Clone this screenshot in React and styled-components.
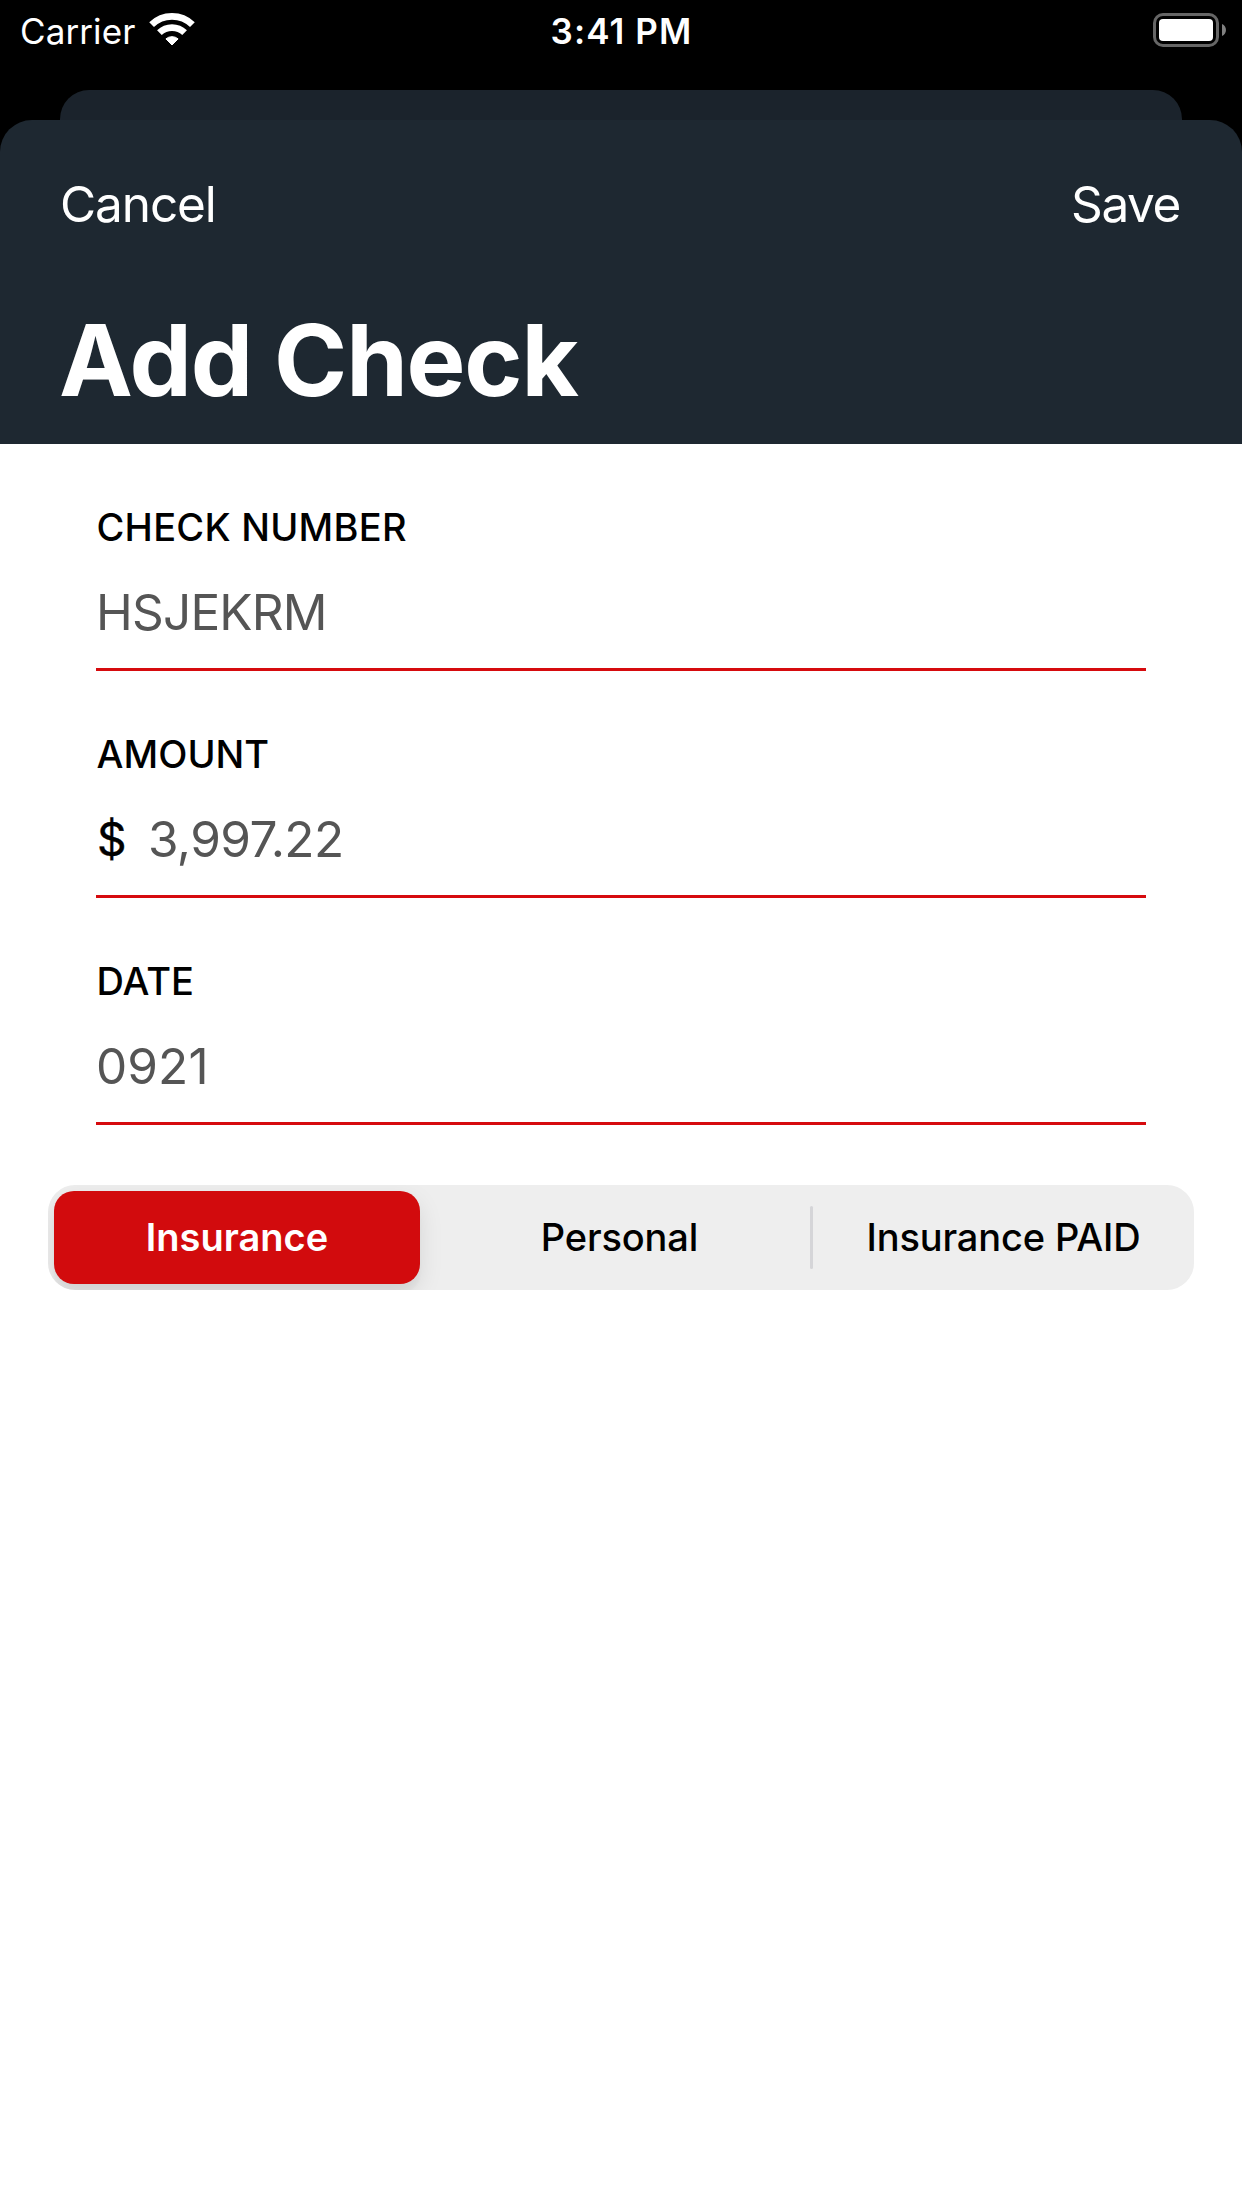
import React, { useState } from "react";
import styled, { createGlobalStyle } from "styled-components";

const GlobalStyle = createGlobalStyle`
  *, *::before, *::after { box-sizing: border-box; }
  body {
    margin: 0;
    background: #000;
    font-family: Inter, "Liberation Sans", sans-serif;
    -webkit-font-smoothing: antialiased;
  }
`;

const Screen = styled.div`
  display: flex;
  flex-direction: column;
  width: 1242px;
  height: 2208px;
  background: #000;
  overflow: hidden;
`;

const StatusBar = styled.header`
  display: grid;
  grid-template-columns: 1fr auto 1fr;
  align-items: center;
  height: 60px;
  margin-bottom: 30px;
  padding: 0 16px 0 20px;
  color: #fff;
  font-size: 35px;
  line-height: 44px;
`;

const Carrier = styled.div`
  display: flex;
  align-items: center;
  gap: 13px;
  padding-top: 2px;
  letter-spacing: 0.1px;

  svg { margin-bottom: 4px; }
`;

const Clock = styled.time`
  padding: 2px 3px 0 0;
  font-weight: 600;
  letter-spacing: 1.1px;
`;

const Battery = styled.div`
  justify-self: end;
  display: flex;
  align-items: center;
`;

const SheetBehind = styled.div`
  flex: none;
  height: 30px;
  margin: 0 60px;
  border-radius: 29px 29px 0 0;
  background: #1b232c;
`;

const Sheet = styled.main`
  flex: 1;
  display: flex;
  flex-direction: column;
`;

const SheetHeader = styled.div`
  flex: none;
  height: 324px;
  padding: 54px 62px 0 60px;
  border-radius: 32px 32px 0 0;
  background: #1e2831;
  color: #fff;
`;

const NavRow = styled.nav`
  display: flex;
  justify-content: space-between;
  height: 60px;
`;

const NavButton = styled.button`
  padding: 0;
  border: 0;
  background: none;
  color: inherit;
  font: 400 49.5px/60px Inter, "Liberation Sans", sans-serif;
  letter-spacing: ${(p) => p.$tracking}px;
`;

const Title = styled.h1`
  margin: 66px 0 0 -1px;
  font-size: 99px;
  font-weight: 700;
  line-height: 120px;
  letter-spacing: -1.2px;
`;

const Form = styled.form`
  flex: 1;
  display: flex;
  flex-direction: column;
  padding: 0 48px;
  background: #fff;
`;

const Field = styled.div`
  display: flex;
  flex-direction: column;
  gap: 31px;
  margin: 0 48px;
  padding: 60px 0 25px;
  border-bottom: 3px solid #d60b0e;
`;

const Label = styled.div`
  height: 46px;
  padding-left: 0.5px;
  color: #000;
  font-size: 38px;
  font-weight: 500;
  line-height: 46px;
  letter-spacing: ${(p) => p.$tracking}px;
`;

const ValueRow = styled.div`
  display: flex;
  align-items: center;
  height: 62px;
`;

const Prefix = styled.span`
  width: 52px;
  padding-left: 1px;
  color: #000;
  font-size: 46px;
  font-weight: 400;
  line-height: 62px;
  -webkit-text-stroke: 0.4px #000;
`;

const Value = styled.span`
  color: #555;
  font-size: 49.5px;
  line-height: 62px;
  letter-spacing: ${(p) => p.$tracking}px;
`;

const Segmented = styled.div`
  display: grid;
  grid-template-columns: 366px 9px 381px 3px 381px;
  align-items: center;
  height: 105px;
  margin-top: 60px;
  padding-left: 6px;
  border-radius: 27px;
  background: #eee;
  overflow: hidden;
`;

const Segment = styled.button`
  height: 93px;
  padding: 0 0 2px;
  border: 0;
  border-radius: 20px;
  background: ${(p) => (p.$active ? "#d20b0d" : "transparent")};
  box-shadow: ${(p) => (p.$active ? "0 9px 24px rgba(0, 0, 0, 0.1), 0 9px 3px rgba(0, 0, 0, 0.03)" : "none")};
  color: ${(p) => (p.$active ? "#fff" : "#000")};
  font: ${(p) => (p.$active ? 600 : 500)} 38px/46px Inter, "Liberation Sans", sans-serif;
  letter-spacing: ${(p) => (p.$active ? 0 : -0.15)}px;
`;

const Divider = styled.span`
  height: 63px;
  border-radius: 1.5px;
  background: ${(p) => (p.$hidden ? "transparent" : "#d5d5d8")};
`;

const WifiIcon = () => (
  <svg width="48" height="34" viewBox="0 0 48 34" fill="none" stroke="#fff">
    <path d="M3.6 12.6A29.3 29.3 0 0 1 44.4 12.6" strokeWidth="6.8" />
    <path d="M11.4 20.7A18.1 18.1 0 0 1 36.6 20.7" strokeWidth="6.7" />
    <path
      d="M17.9 26.9A9.4 9.4 0 0 1 30.1 26.9L24 33Z"
      fill="#fff"
      strokeWidth="1"
      strokeLinejoin="round"
    />
  </svg>
);

const BatteryIcon = () => (
  <svg width="73" height="34" viewBox="0 0 73 34">
    <rect x="1.5" y="1.5" width="63" height="31" rx="8.5" fill="none" stroke="#666" strokeWidth="3" />
    <rect x="6" y="6" width="54" height="22" rx="4" fill="#fff" />
    <path d="M69 11C74.3 13 74.3 21 69 23Z" fill="#808080" />
  </svg>
);

const fields = [
  { label: "CHECK NUMBER", value: "HSJEKRM", labelTracking: 0.25, valueTracking: -0.8 },
  { label: "AMOUNT", value: "3,997.22", prefix: "$", labelTracking: 0.05, valueTracking: -0.6 },
  { label: "DATE", value: "0921", labelTracking: 0, valueTracking: 0.1 },
];

const kinds = ["Insurance", "Personal", "Insurance PAID"];

export default function App() {
  const [selected, setSelected] = useState(0);

  return (
    <Screen>
      <GlobalStyle />
      <StatusBar>
        <Carrier>
          Carrier
          <WifiIcon />
        </Carrier>
        <Clock>3:41 PM</Clock>
        <Battery>
          <BatteryIcon />
        </Battery>
      </StatusBar>
      <SheetBehind />
      <Sheet>
        <SheetHeader>
          <NavRow>
            <NavButton $tracking={-1.1}>Cancel</NavButton>
            <NavButton $tracking={-1.4}>Save</NavButton>
          </NavRow>
          <Title>Add Check</Title>
        </SheetHeader>
        <Form onSubmit={(e) => e.preventDefault()}>
          {fields.map((f) => (
            <Field key={f.label}>
              <Label $tracking={f.labelTracking}>{f.label}</Label>
              <ValueRow>
                {f.prefix && <Prefix>{f.prefix}</Prefix>}
                <Value $tracking={f.valueTracking}>{f.value}</Value>
              </ValueRow>
            </Field>
          ))}
          <Segmented>
            {kinds.map((kind, i) => (
              <React.Fragment key={kind}>
                {i > 0 && <Divider $hidden={selected === i || selected === i - 1} />}
                <Segment type="button" $active={selected === i} onClick={() => setSelected(i)}>
                  {kind}
                </Segment>
              </React.Fragment>
            ))}
          </Segmented>
        </Form>
      </Sheet>
    </Screen>
  );
}
